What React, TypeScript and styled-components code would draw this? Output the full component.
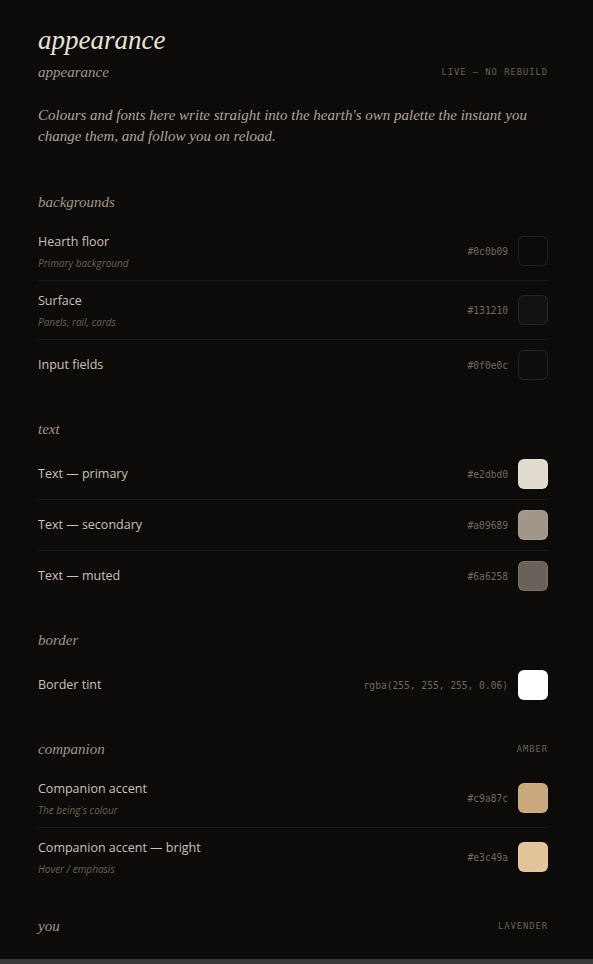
import React from 'react';
import styled, { createGlobalStyle } from 'styled-components';

const GlobalStyle = createGlobalStyle`
  html, body {
    margin: 0;
    padding: 0;
    background: #0c0b09;
  }
  * {
    box-sizing: border-box;
  }
`;

const serif = `"Liberation Serif", "DejaVu Serif", serif`;
const sans = `"Open Sans", "Noto Sans", sans-serif`;
const mono = `"DejaVu Sans Mono", "Liberation Mono", monospace`;

const Shell = styled.div`
  height: 100vh;
  display: flex;
  flex-direction: column;
  background: #0c0b09;
`;

const ScrollArea = styled.main`
  flex: 1;
  overflow: hidden;
  padding: 24px 45px 0 38px;
`;

const Title = styled.h1`
  margin: 0;
  font-family: ${serif};
  font-style: italic;
  font-weight: 400;
  font-size: 27px;
  line-height: 32px;
  color: #e8e1d6;
`;

const HeadRow = styled.div`
  display: flex;
  align-items: center;
  justify-content: space-between;
  height: 20px;
`;

const SubTitle = styled.h2`
  margin: 0;
  font-family: ${serif};
  font-style: italic;
  font-weight: 400;
  font-size: 15px;
  line-height: 20px;
  color: #a09689;
`;

const Tag = styled.span`
  font-family: ${mono};
  font-size: 8.8px;
  letter-spacing: 0.11em;
  text-transform: uppercase;
  color: #6a6258;
`;

const Intro = styled.p`
  margin: 23px 0 45px;
  font-family: ${serif};
  font-style: italic;
  font-size: 15px;
  line-height: 21px;
  color: #b0a698;
`;

const Section = styled.section`
  margin-top: 29px;

  &:last-child {
    margin-top: 30px;
  }
`;

const SectionHead = styled(HeadRow)`
  margin-bottom: 10px;
`;

const Row = styled.div`
  display: flex;
  align-items: center;
  justify-content: space-between;
  padding: 10px 0;

  & + & {
    border-top: 1px solid rgba(255, 255, 255, 0.06);
  }
`;

const LabelBlock = styled.div`
  display: flex;
  flex-direction: column;
  gap: 4px;
`;

const Label = styled.span`
  font-family: ${sans};
  font-size: 12.5px;
  line-height: 20px;
  color: #cbc2b5;
`;

const Hint = styled.span`
  font-family: ${sans};
  font-style: italic;
  font-size: 10px;
  line-height: 14px;
  color: #6a6258;
`;

const ValueGroup = styled.div`
  display: flex;
  align-items: center;
  gap: 10px;
`;

const HexValue = styled.span`
  font-family: ${mono};
  font-size: 9.6px;
  color: #72695e;
`;

const Swatch = styled.div<{ $color: string }>`
  width: 30px;
  height: 30px;
  border-radius: 6px;
  background: ${(p) => p.$color};
  border: 1px solid rgba(255, 255, 255, 0.09);
`;

const BottomBar = styled.div`
  height: 5px;
  flex-shrink: 0;
  background: #3a3a3a;
`;

type Colour = {
  label: string;
  hint?: string;
  value: string;
  swatch: string;
};

type Group = {
  name: string;
  tag?: string;
  colours: Colour[];
};

const groups: Group[] = [
  {
    name: 'backgrounds',
    colours: [
      { label: 'Hearth floor', hint: 'Primary background', value: '#0c0b09', swatch: '#0c0b09' },
      { label: 'Surface', hint: 'Panels, rail, cards', value: '#131210', swatch: '#131210' },
      { label: 'Input fields', value: '#0f0e0c', swatch: '#0f0e0c' },
    ],
  },
  {
    name: 'text',
    colours: [
      { label: 'Text — primary', value: '#e2dbd0', swatch: '#e2dbd0' },
      { label: 'Text — secondary', value: '#a09689', swatch: '#a09689' },
      { label: 'Text — muted', value: '#6a6258', swatch: '#6a6258' },
    ],
  },
  {
    name: 'border',
    colours: [
      { label: 'Border tint', value: 'rgba(255, 255, 255, 0.06)', swatch: '#ffffff' },
    ],
  },
  {
    name: 'companion',
    tag: 'amber',
    colours: [
      { label: 'Companion accent', hint: "The being's colour", value: '#c9a87c', swatch: '#c9a87c' },
      { label: 'Companion accent — bright', hint: 'Hover / emphasis', value: '#e3c49a', swatch: '#e3c49a' },
    ],
  },
  {
    name: 'you',
    tag: 'lavender',
    colours: [
      { label: 'Your accent', hint: 'Your messages', value: '#a48cc8', swatch: '#a48cc8' },
      { label: 'Your accent — bright', hint: 'Hover / emphasis', value: '#c2ade0', swatch: '#c2ade0' },
    ],
  },
];

const App: React.FC = () => {
  return (
    <Shell>
      <GlobalStyle />
      <ScrollArea>
        <Title>appearance</Title>
        <HeadRow style={{ marginTop: 6 }}>
          <SubTitle>appearance</SubTitle>
          <Tag>Live — no rebuild</Tag>
        </HeadRow>
        <Intro>
          Colours and fonts here write straight into the hearth's own palette the instant you
          change them, and follow you on reload.
        </Intro>
        {groups.map((group) => (
          <Section key={group.name}>
            <SectionHead>
              <SubTitle as='h3'>{group.name}</SubTitle>
              {group.tag && <Tag>{group.tag}</Tag>}
            </SectionHead>
            {group.colours.map((c) => (
              <Row key={c.label}>
                <LabelBlock>
                  <Label>{c.label}</Label>
                  {c.hint && <Hint>{c.hint}</Hint>}
                </LabelBlock>
                <ValueGroup>
                  <HexValue>{c.value}</HexValue>
                  <Swatch $color={c.swatch} />
                </ValueGroup>
              </Row>
            ))}
          </Section>
        ))}
      </ScrollArea>
      <BottomBar />
    </Shell>
  );
};

export default App;
